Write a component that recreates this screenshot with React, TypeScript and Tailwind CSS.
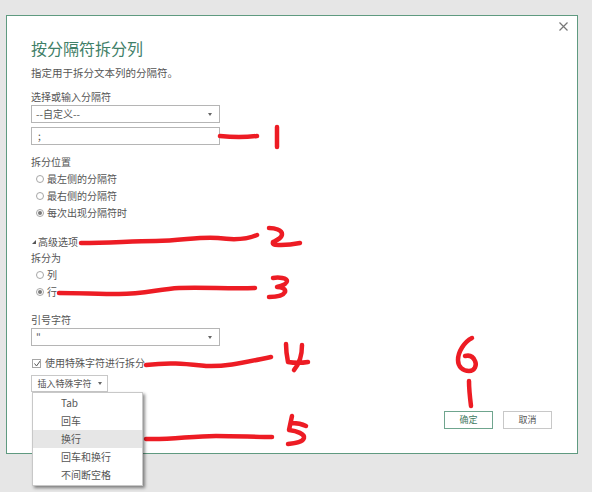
function Radio({ label, checked }: { label: string; checked?: boolean }) {
  return (
    <div className="flex h-[17px] items-center pl-[5px]">
      <span className="flex h-2 w-2 items-center justify-center rounded-full border border-[#a6a6a6] bg-white">
        {checked && <span className="h-1 w-1 rounded-full bg-[#7a7a7a]" />}
      </span>
      <span className="ml-[3px]">{label}</span>
    </div>
  );
}

function Caret() {
  return <span className="h-0 w-0 border-x-[2px] border-t-[3px] border-x-transparent border-t-[#666]" />;
}

function Select({ value }: { value: string }) {
  return (
    <div className="flex h-[18px] w-[189px] items-center justify-between border border-[#b5b5b5] bg-white pl-[4px] pr-[7px]">
      <span>{value}</span>
      <Caret />
    </div>
  );
}

// hand drawn red marks on top of the screenshot
function Scribbles() {
  return (
    <svg className="absolute left-0 top-0" width="592" height="492" fill="none" stroke="#ed1c24" strokeWidth="4.5" strokeLinecap="round" strokeLinejoin="round">
      <path d="M220 136c10 1 28 1 37 0" />
      <path d="M277 127l0 20" />
      <path d="M81 243c30 0 50-2 75-2s45-5 62-3c15 2 28 2 39-3" />
      <path d="M269 228c6 0 13 2 13 6 0 4-5 6-9 8-1 3 2 3 8 3 6 0 14-1 19-2" />
      <path d="M59 293c20 0 40 1 60 1 25 0 40-5 60-6 25-1 50 1 76 0" />
      <path d="M273 278c6-1 14 0 14 3s-6 5-10 6c5 0 9 2 8 5-2 4-10 5-16 5" />
      <path d="M146 365c25-3 40-1 60 1 20 1 40-4 65-9" />
      <path d="M286 344c0 6 1 13 2 18 6 1 14 1 20 0M302 345c0 10-2 18-8 25" />
      <path d="M146 439c25 1 45-3 70-3 20 0 40 1 56 1" />
      <path d="M292 416l-3 14c8 1 16 4 15 8-1 4-8 5-16 6M292 423c5 0 10 1 14 3" />
      <path d="M472 338c-8 4-14 14-14 22 0 7 5 11 11 11 6 0 8-6 6-10-2-5-6-6-10-5" />
      <path d="M469 381c0 8 1 17 2 25" />
    </svg>
  );
}

export default function App() {
  return (
    <div className="relative h-[492px] w-[592px] overflow-hidden bg-[#e6e6e6] pl-[6px] pt-[15px] text-[10px] leading-[16px] text-[#555] [font-family:'Noto_Sans_CJK_SC','Liberation_Sans',sans-serif]">
      <div className="relative flex h-[439px] w-[572px] flex-col border border-[#5f9a80] bg-white pl-[24px] pr-[25px] pt-[22px]">
        <svg className="absolute right-[9px] top-[6px]" width="9" height="9" fill="none" stroke="#777" strokeWidth="1.2">
          <path d="M0.5 0.5l8 8M8.5 0.5l-8 8" />
        </svg>
        <h1 className="text-[16px] leading-[20px] font-normal text-[#3f8068]">按分隔符拆分列</h1>
        <p className="mt-[7px] text-[10.5px]">指定用于拆分文本列的分隔符。</p>
        <div className="mt-[8px]">选择或输入分隔符</div>
        <Select value="--自定义--" />
        <div className="mt-[4px] flex h-[18px] w-[189px] items-center border border-[#b5b5b5] bg-white pl-[6px]">;</div>
        <div className="mt-[9px]">拆分位置</div>
        <Radio label="最左侧的分隔符" />
        <Radio label="最右侧的分隔符" />
        <Radio label="每次出现分隔符时" checked />
        <div className="mt-[13px] flex items-center">
          <span className="ml-[1px] h-0 w-0 border-b-[4px] border-l-[4px] border-b-[#555] border-l-transparent" />
          <span className="ml-[2px]">高级选项</span>
        </div>
        <div>拆分为</div>
        <Radio label="列" />
        <Radio label="行" checked />
        <div className="mt-[12px]">引号字符</div>
        <Select value={'"'} />
        <div className="mt-[9px] flex items-center">
          <span className="ml-[1px] flex h-[9px] w-[9px] items-center justify-center border border-[#a6a6a6]">
            <svg width="9" height="9" fill="none" stroke="#555" strokeWidth="1">
              <path d="M1.5 4.5l2 2.5 4-5.5" />
            </svg>
          </span>
          <span className="ml-[4px]">使用特殊字符进行拆分</span>
        </div>
        <div className="relative mt-[4px] w-[77px]">
          <div className="flex h-[17px] items-center justify-center gap-[6px] whitespace-nowrap border border-[#c8c8c8] bg-white text-[9px]">
            <span>插入特殊字符</span>
            <Caret />
          </div>
          <div className="absolute left-[1px] top-[17px] z-10 w-[111px] border border-[#c8c8c8] bg-white py-[1px] shadow-[2px_2px_3px_rgba(0,0,0,0.45)]">
            {["Tab", "回车", "换行", "回车和换行", "不间断空格"].map((item) => (
              <div key={item} className={item === "换行" ? "h-[18px] bg-[#e6e6e6] pl-[28px] leading-[18px]" : "h-[18px] pl-[28px] leading-[18px]"}>
                {item}
              </div>
            ))}
          </div>
        </div>
        <div className="mt-[19px] flex justify-end gap-[10px]">
          <button className="h-[18px] w-[49px] border border-[#6fa58e] text-[9px] text-[#3f7a62]">确定</button>
          <button className="h-[18px] w-[49px] border border-[#c8c8c8] text-[9px]">取消</button>
        </div>
      </div>
      <Scribbles />
    </div>
  );
}
